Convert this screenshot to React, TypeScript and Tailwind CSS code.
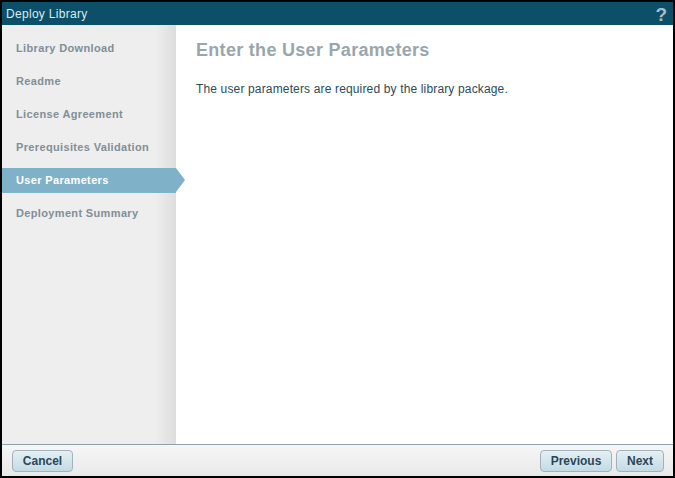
import React from "react";

const steps = [
  "Library Download",
  "Readme",
  "License Agreement",
  "Prerequisites Validation",
  "User Parameters",
  "Deployment Summary",
];

function StepItem({ label, active }: { label: string; active: boolean }) {
  if (active) {
    return (
      <div className="relative h-[25px] flex items-center pl-[14px] bg-[#7fb2c8] text-white">
        {label}
        {/* pointer */}
        <div className="absolute top-0 right-[-9px] w-0 h-0 border-y-[12.5px] border-y-transparent border-l-[9px] border-l-[#7fb2c8]" />
      </div>
    );
  }
  return <div className="h-[25px] flex items-center pl-[14px] text-[#818f97]">{label}</div>;
}

function Btn({ children, className = "" }: { children: React.ReactNode; className?: string }) {
  return (
    <button
      className={`h-[22px] rounded-[4px] border border-[#a3b3bb] bg-gradient-to-b from-[#e4f0f4] to-[#c3dbe4] text-[12px] font-bold text-[#2b4757] ${className}`}
    >
      {children}
    </button>
  );
}

export default function App() {
  return (
    <div
      className="w-[675px] h-[478px] bg-black p-[2px] flex flex-col"
      style={{ fontFamily: '"Liberation Sans", Arial, sans-serif' }}
    >
      {/* Title bar */}
      <div className="h-[23px] shrink-0 bg-[#0b4f69] flex items-center justify-between pl-[4px] pr-[6px]">
        <span className="text-[12px] tracking-[0.3px] text-[#dbeaf1]">Deploy Library</span>
        <span className="text-[19px] font-bold leading-none text-[#a9bcc6] mt-[1px]">?</span>
      </div>

      {/* Body */}
      <div className="flex flex-1 min-h-0 bg-white">
        <div className="w-[174px] shrink-0 bg-[linear-gradient(to_right,#eeeeee_0%,#eeeeee_88%,#dddddd_100%)] pt-[11px] flex flex-col gap-[8px] text-[11px] font-bold tracking-[0.35px]">
          {steps.map((s) => (
            <StepItem key={s} label={s} active={s === "User Parameters"} />
          ))}
        </div>
        <div className="flex-1 pl-[20px] pt-[12px]">
          <h1 className="text-[18px] font-bold tracking-[0.3px] text-[#9aa6ad] leading-[26px]">Enter the User Parameters</h1>
          <p className="mt-[17px] text-[12px] tracking-[0.15px] text-[#2d4a57]">The user parameters are required by the library package.</p>
        </div>
      </div>

      {/* Footer */}
      <div className="h-[32px] shrink-0 border-t border-[#8fa3ad] bg-gradient-to-b from-[#f6f6f6] to-[#e9e9e9] flex items-center justify-between pl-[10px] pr-[9px]">
        <Btn className="w-[61px]">Cancel</Btn>
        <div className="flex gap-[4px]">
          <Btn className="w-[72px]">Previous</Btn>
          <Btn className="w-[48px]">Next</Btn>
        </div>
      </div>
    </div>
  );
}
